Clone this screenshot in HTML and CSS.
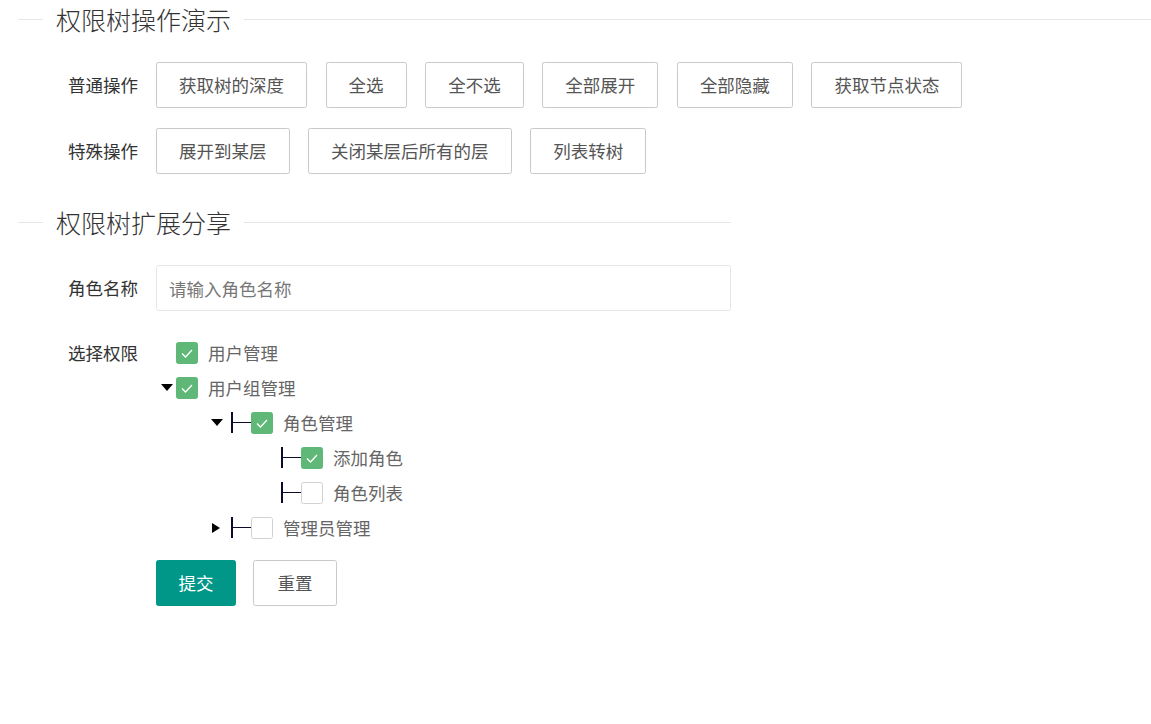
FILE: index.html
```html
<!DOCTYPE html>
<html lang="zh-CN">
<head>
<meta charset="utf-8">
<title>权限树</title>
<link rel="stylesheet" href="styles.css">
</head>
<body>
<div class="page">
  <div class="title title-wide"><span class="title-text">权限树操作演示</span></div>
  <div class="form">
    <div class="row row-btns">
      <div class="label">普通操作</div>
      <div class="btns">
        <button class="btn">获取树的深度</button>
        <button class="btn">全选</button>
        <button class="btn">全不选</button>
        <button class="btn">全部展开</button>
        <button class="btn">全部隐藏</button>
        <button class="btn">获取节点状态</button>
      </div>
    </div>
    <div class="row row-btns row-last">
      <div class="label">特殊操作</div>
      <div class="btns">
        <button class="btn">展开到某层</button>
        <button class="btn">关闭某层后所有的层</button>
        <button class="btn">列表转树</button>
      </div>
    </div>
  </div>

  <div class="title title-narrow"><span class="title-text">权限树扩展分享</span></div>
  <div class="form form-narrow">
    <div class="row row-input">
      <div class="label">角色名称</div>
      <input class="input" type="text" placeholder="请输入角色名称">
    </div>
    <div class="row row-tree">
      <div class="label label-top">选择权限</div>
      <div class="tree">
        <div class="node lv1">
          <span class="arrow"></span>
          <span class="cb on"><svg viewBox="0 0 22 22" width="22" height="22"><polyline points="6,11.5 9.5,15 16,8" fill="none" stroke="#fff" stroke-width="1.3"/></svg></span>
          <span class="txt">用户管理</span>
        </div>
        <div class="node lv1">
          <span class="arrow down"></span>
          <span class="cb on"><svg viewBox="0 0 22 22" width="22" height="22"><polyline points="6,11.5 9.5,15 16,8" fill="none" stroke="#fff" stroke-width="1.3"/></svg></span>
          <span class="txt">用户组管理</span>
        </div>
        <div class="node lv2">
          <span class="arrow down"></span>
          <span class="branch"></span>
          <span class="cb on"><svg viewBox="0 0 22 22" width="22" height="22"><polyline points="6,11.5 9.5,15 16,8" fill="none" stroke="#fff" stroke-width="1.3"/></svg></span>
          <span class="txt">角色管理</span>
        </div>
        <div class="node lv3">
          <span class="arrow"></span>
          <span class="branch"></span>
          <span class="cb on"><svg viewBox="0 0 22 22" width="22" height="22"><polyline points="6,11.5 9.5,15 16,8" fill="none" stroke="#fff" stroke-width="1.3"/></svg></span>
          <span class="txt">添加角色</span>
        </div>
        <div class="node lv3">
          <span class="arrow"></span>
          <span class="branch"></span>
          <span class="cb"></span>
          <span class="txt">角色列表</span>
        </div>
        <div class="node lv2">
          <span class="arrow right"></span>
          <span class="branch"></span>
          <span class="cb"></span>
          <span class="txt">管理员管理</span>
        </div>
      </div>
    </div>
    <div class="row row-submit">
      <div class="label"></div>
      <div class="btns btns-submit">
        <button class="btn btn-primary">提交</button>
        <button class="btn btn-reset">重置</button>
      </div>
    </div>
  </div>
</div>
</body>
</html>
```

FILE: styles.css
```css
* { box-sizing: border-box; }
html, body { margin: 0; padding: 0; background: #fff; }
body {
  font-family: "Noto Sans CJK SC", "Microsoft YaHei", sans-serif;
  color: #333;
  font-size: 17.5px;
}
.page { padding-left: 18px; }

.title {
  display: flex;
  align-items: center;
  height: 38px;
}
.title::before {
  content: "";
  width: 25px;
  border-top: 1px solid #e6e6e6;
  margin-right: 13px;
}
.title::after {
  content: "";
  flex: 1;
  border-top: 1px solid #e6e6e6;
  margin-left: 13px;
}
.title-text {
  font-size: 25px;
  font-weight: 300;
  line-height: 38px;
  color: #333;
}
.title-narrow { width: 713px; margin-top: 29px; }

.form { padding-left: 6px; margin-top: 24px; }
.form-narrow { margin-top: 24px; }

.row {
  display: grid;
  grid-template-columns: 132px 1fr;
  align-items: center;
  margin-bottom: 20px;
}
.row-last { margin-bottom: 0; }
.label {
  text-align: right;
  padding-right: 18px;
  font-size: 17.5px;
  color: #333;
  line-height: 24px;
}
.label-top { align-self: start; padding-top: 5.5px; }

.btns { display: flex; gap: 18.6px; }
.btn {
  height: 46px;
  padding: 0 22px;
  border: 1px solid #c9c9c9;
  border-radius: 2.4px;
  background: #fff;
  color: #555;
  font-family: inherit;
  font-size: 17.5px;
  line-height: 44px;
  white-space: nowrap;
  cursor: pointer;
}
.btn-primary {
  background: #009688;
  border-color: #009688;
  color: #fff;
  padding: 0 21.5px;
}
.btn-reset { padding: 0 23.5px; }
.btns-submit { gap: 17px; }

.row-input { margin-bottom: 24px; }
.input {
  width: 575px;
  height: 46px;
  border: 1px solid #e6e6e6;
  border-radius: 2.4px;
  padding: 0 12px;
  font-family: inherit;
  font-size: 17.5px;
  color: #333;
  outline: none;
}
.input::placeholder { color: #777; }

.row-tree { margin-bottom: 15px; }
.tree { display: flex; flex-direction: column; }
.node {
  display: flex;
  align-items: center;
  height: 35px;
}
.lv1 { padding-left: 0; }
.lv2 { padding-left: 50px; }
.lv3 { padding-left: 100px; }

.arrow {
  width: 20px;
  height: 20px;
  flex: none;
  display: flex;
  align-items: center;
  justify-content: center;
}
.arrow.down::before {
  content: "";
  width: 0; height: 0;
  border-left: 6.5px solid transparent;
  border-right: 6.5px solid transparent;
  border-top: 7px solid #000;
  margin-left: 1px;
}
.arrow.right::before {
  content: "";
  width: 0; height: 0;
  border-top: 5.5px solid transparent;
  border-bottom: 5.5px solid transparent;
  border-left: 8.5px solid #000;
}

.branch {
  position: relative;
  width: 20px;
  height: 21px;
  margin-left: 5px;
  flex: none;
  border-left: 2px solid #0b0b2a;
}
.branch::after {
  content: "";
  position: absolute;
  left: 0;
  right: 0;
  top: 9.5px;
  border-top: 1.5px solid #0b0b2a;
}

.cb {
  width: 22px;
  height: 22px;
  flex: none;
  border: 1px solid #d2d2d2;
  border-radius: 2.4px;
  background: #fff;
  display: flex;
  align-items: center;
  justify-content: center;
  overflow: hidden;
}
.cb.on { background: #5fb878; border-color: #5fb878; }
.cb svg { display: block; flex: none; }

.txt {
  margin-left: 10px;
  color: #666;
  font-size: 17.5px;
  line-height: 24px;
  white-space: nowrap;
}
```
